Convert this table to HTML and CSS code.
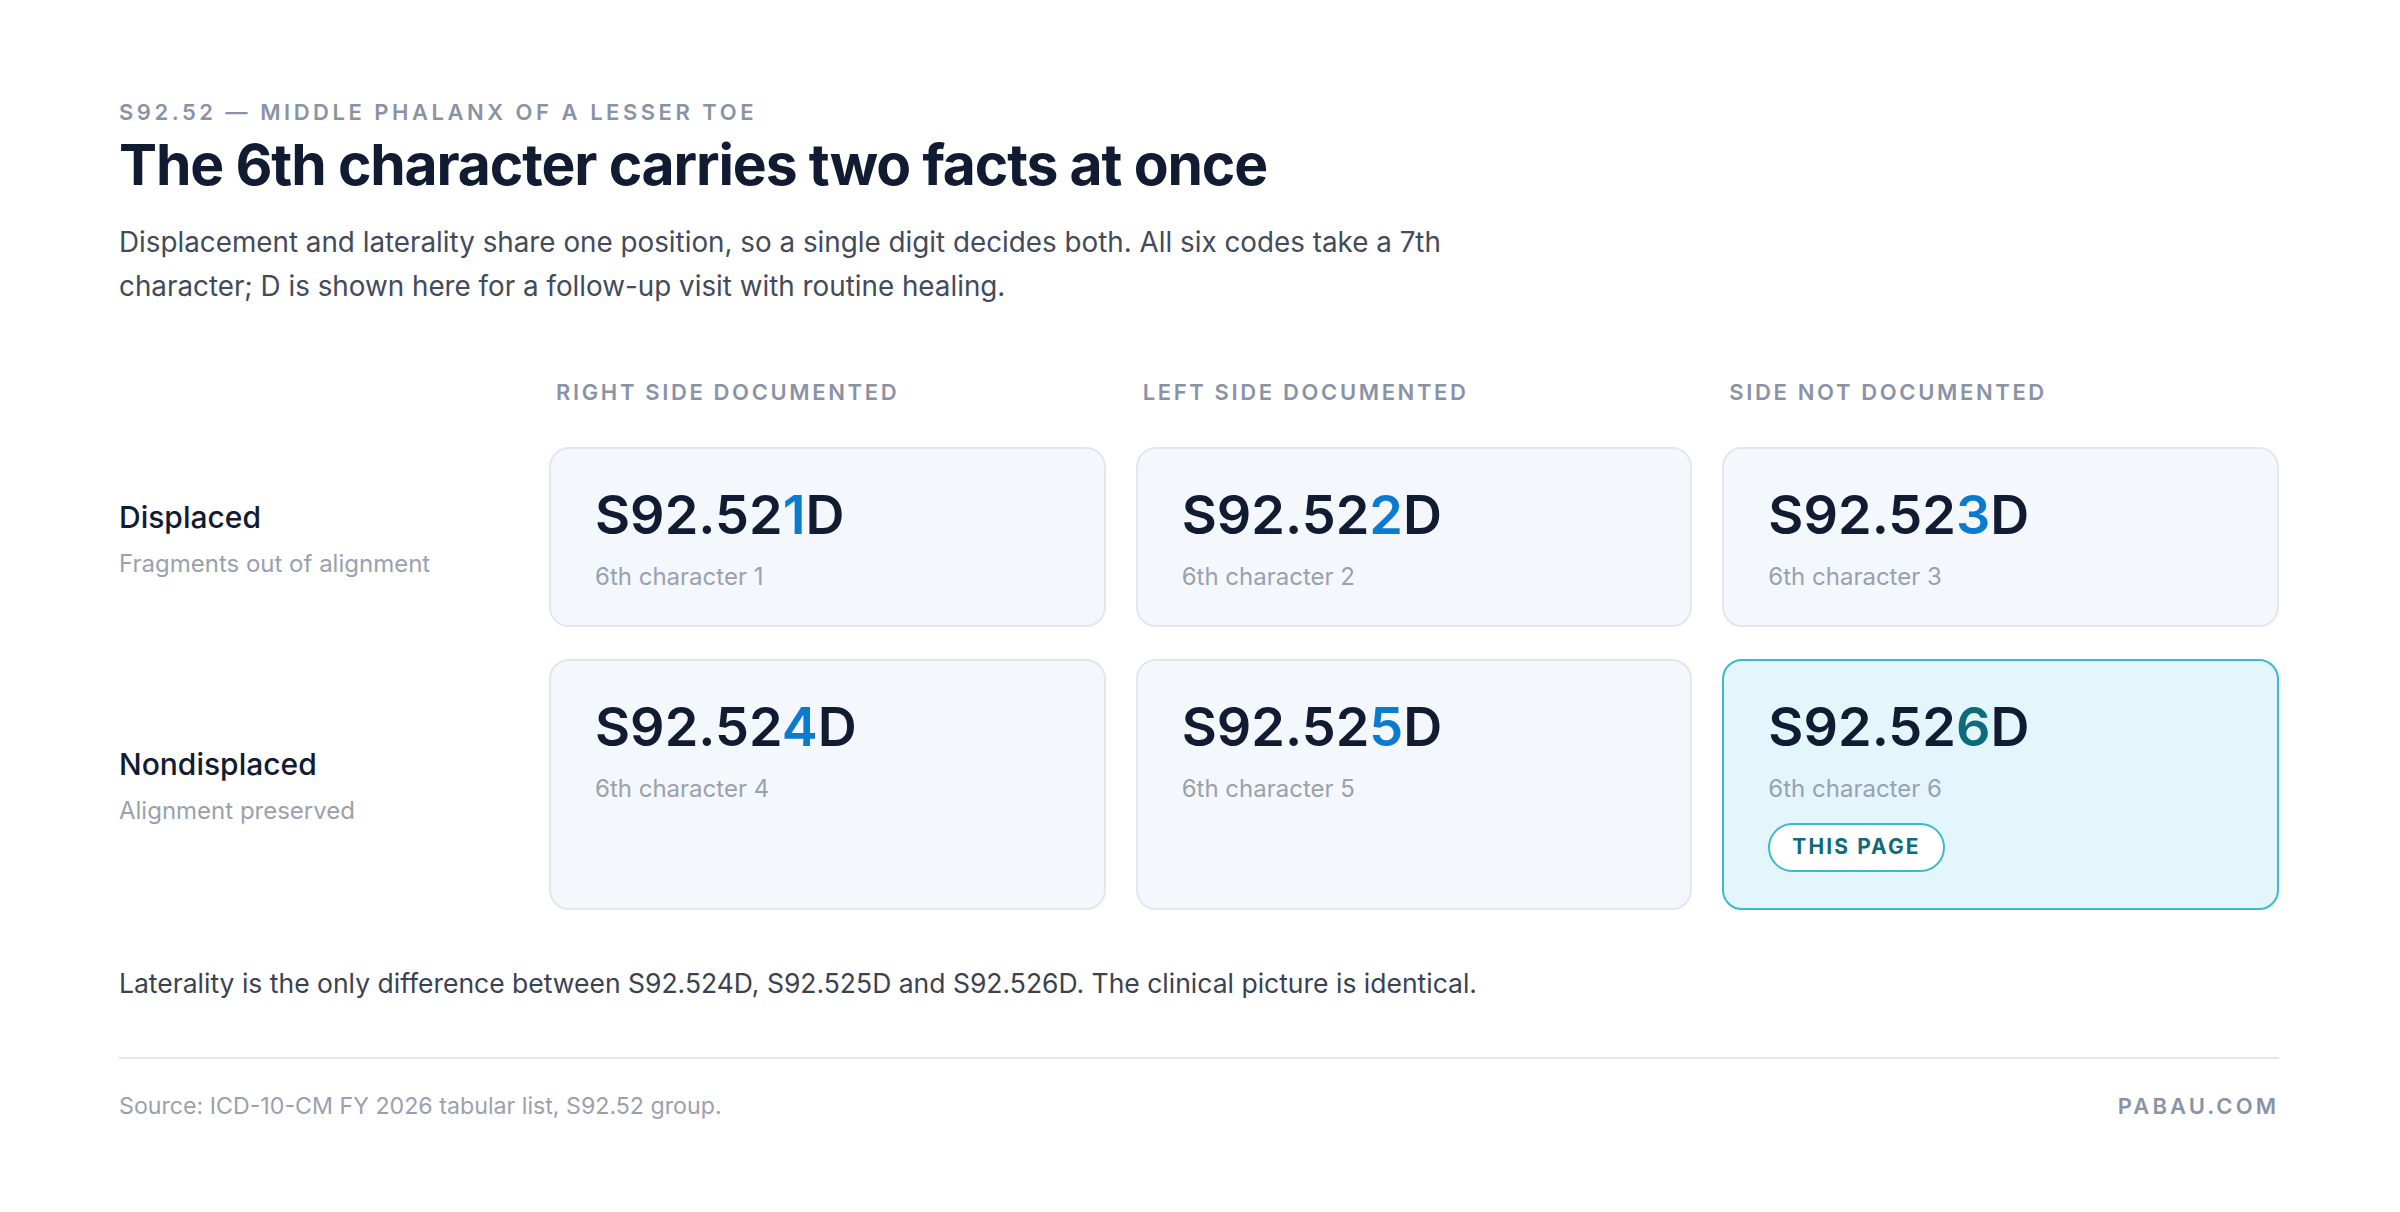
FILE: index.html
```html
<!DOCTYPE html>
<html lang="en">
<head>
<meta charset="utf-8">
<title>S92.52 — 6th character</title>
<link rel="stylesheet" href="styles.css">
</head>
<body>
<main class="page">
  <header class="intro">
    <p class="eyebrow">S92.52 — Middle phalanx of a lesser toe</p>
    <h1 class="title">The 6th character carries two facts at once</h1>
    <p class="lede">Displacement and laterality share one position, so a single digit decides both. All six codes take a 7th character; D is shown here for a follow-up visit with routine healing.</p>
  </header>

  <section class="matrix">
    <div class="col-heads">
      <div class="spacer"></div>
      <div class="col-head">Right side documented</div>
      <div class="col-head">Left side documented</div>
      <div class="col-head">Side not documented</div>
    </div>

    <div class="grid">
      <div class="row-label">
        <div class="row-name">Displaced</div>
        <div class="row-sub">Fragments out of alignment</div>
      </div>
      <div class="card">
        <div class="code">S92.52<span class="digit">1</span>D</div>
        <div class="caption">6th character 1</div>
      </div>
      <div class="card">
        <div class="code">S92.52<span class="digit">2</span>D</div>
        <div class="caption">6th character 2</div>
      </div>
      <div class="card">
        <div class="code">S92.52<span class="digit">3</span>D</div>
        <div class="caption">6th character 3</div>
      </div>

      <div class="row-label">
        <div class="row-name">Nondisplaced</div>
        <div class="row-sub">Alignment preserved</div>
      </div>
      <div class="card">
        <div class="code">S92.52<span class="digit">4</span>D</div>
        <div class="caption">6th character 4</div>
      </div>
      <div class="card">
        <div class="code">S92.52<span class="digit">5</span>D</div>
        <div class="caption">6th character 5</div>
      </div>
      <div class="card card-current">
        <div class="code">S92.52<span class="digit">6</span>D</div>
        <div class="caption">6th character 6</div>
        <div class="pill">This page</div>
      </div>
    </div>
  </section>

  <p class="note">Laterality is the only difference between S92.524D, S92.525D and S92.526D. The clinical picture is identical.</p>

  <footer class="foot">
    <span class="source">Source: ICD-10-CM FY 2026 tabular list, S92.52 group.</span>
    <span class="brand">PABAU.COM</span>
  </footer>
</main>
</body>
</html>
```

FILE: styles.css
```css
* { box-sizing: border-box; }

html, body {
  margin: 0;
  padding: 0;
  background: #ffffff;
}

body {
  font-family: Inter, "Noto Sans", "Liberation Sans", sans-serif;
  color: #111b32;
}

.page {
  padding: 98px 121px 0 119px;
}

.eyebrow {
  margin: 0;
  font-size: 22px;
  line-height: 28px;
  font-weight: 600;
  letter-spacing: 0.16em;
  text-transform: uppercase;
  color: #8a93a5;
}

.title {
  margin: 5px 0 0;
  font-size: 57px;
  line-height: 68px;
  font-weight: 700;
  letter-spacing: -0.02em;
  color: #111b32;
}

.lede {
  margin: 21px 0 0;
  max-width: 1420px;
  font-size: 27.8px;
  line-height: 44px;
  font-weight: 400;
  color: #434b5b;
}

.matrix {
  margin-top: 70px;
}

.col-heads,
.grid {
  display: grid;
  grid-template-columns: 400px repeat(3, 1fr);
  column-gap: 30px;
}

.col-heads {
  margin-bottom: 41px;
}

.col-head {
  padding-left: 7px;
  font-size: 22px;
  line-height: 28px;
  font-weight: 600;
  letter-spacing: 0.12em;
  text-transform: uppercase;
  color: #8a93a5;
}

.grid {
  row-gap: 32px;
}

.row-label {
  display: flex;
  flex-direction: column;
  justify-content: center;
  padding-top: 4px;
}

.row-name {
  font-size: 30px;
  line-height: 36px;
  font-weight: 500;
  color: #111b32;
}

.row-sub {
  margin-top: 13px;
  font-size: 24px;
  line-height: 32px;
  color: #9aa1ae;
}

.card {
  background: #f4f7fb;
  border: 2px solid #e1e7ef;
  border-radius: 20px;
  padding: 36px 44px 32px;
}

.card-current {
  background: #e2f6fb;
  border-color: #3cb8d0;
  padding-bottom: 36px;
}

.code {
  font-size: 54px;
  line-height: 60px;
  font-weight: 600;
  color: #111b32;
}

.digit {
  color: #0b7bd0;
}

.card-current .digit {
  color: #0f6b7b;
}

.caption {
  margin-top: 16px;
  font-size: 24px;
  line-height: 32px;
  color: #9aa1ae;
}

.pill {
  display: inline-block;
  margin-top: 18px;
  padding: 8px 22px 9px;
  border: 2px solid #3cb8d0;
  border-radius: 999px;
  background: #ffffff;
  font-size: 21px;
  line-height: 28px;
  font-weight: 700;
  letter-spacing: 0.1em;
  text-transform: uppercase;
  color: #0f6b7b;
}

.note {
  margin: 51px 0 0;
  font-size: 26.5px;
  line-height: 44px;
  color: #3a4252;
}

.foot {
  margin-top: 52px;
  border-top: 2px solid #e4e6eb;
  padding-top: 32px;
  display: flex;
  justify-content: space-between;
  align-items: center;
}

.source {
  font-size: 23.2px;
  line-height: 30px;
  color: #9aa1ae;
}

.brand {
  font-size: 22px;
  line-height: 30px;
  font-weight: 600;
  letter-spacing: 0.14em;
  color: #8a93a5;
}
```
